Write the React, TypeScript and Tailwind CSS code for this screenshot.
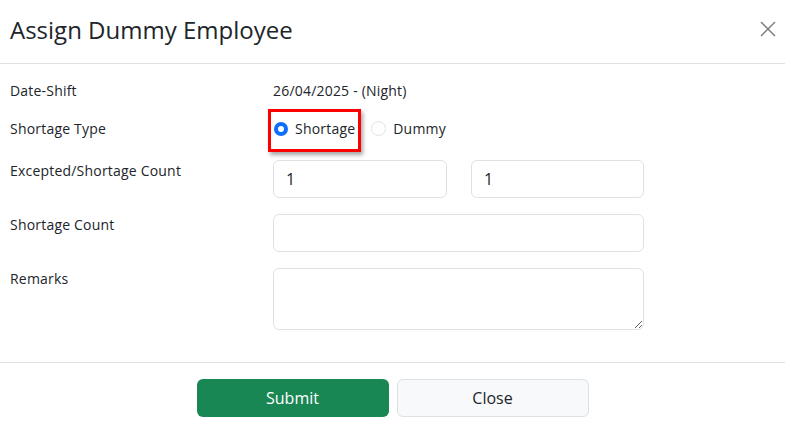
import React from "react";

export default function App() {
  const font = { fontFamily: '"Open Sans", "Noto Sans", sans-serif' };
  return (
    <div className="w-[785px] h-[428px] bg-white text-[#212529] overflow-hidden" style={font}>
      <div className="h-[64px] border-b border-[#dee2e6] flex items-center justify-between pl-[10px] pr-[9px]">
        <h1 className="text-[24px] leading-[30px] font-normal text-[#212529] mt-[-4px]">Assign Dummy Employee</h1>
        <svg width="16" height="16" viewBox="0 0 16 16" className="mt-[-6px]">
          <path d="M1 1 L15 15 M15 1 L1 15" stroke="#7a7a7a" strokeWidth="1.4" fill="none" />
        </svg>
      </div>

      <div className="pt-[16px] pb-[32px] border-b border-[#dee2e6] tracking-[0.2px]">
        <div className="flex h-[21px] mb-[17px] text-[14px] leading-[21px]">
          <div className="w-[273px] pl-[10px]">Date-Shift</div>
          <div>26/04/2025 - (Night)</div>
        </div>

        <div className="flex h-[21px] mb-[21px] text-[14px] leading-[21px]">
          <div className="w-[273px] pl-[10px]">Shortage Type</div>
          <div className="flex items-center relative">
            <div className="absolute left-[-5px] top-[-9px] w-[93px] h-[43px] border-[3px] border-[#ff0000] shadow-[2px_3px_4px_rgba(0,0,0,0.35)]" />
            <span className="w-[14px] h-[14px] rounded-full bg-[#0d6efd] flex items-center justify-center ml-[1px]">
              <span className="w-[6px] h-[6px] rounded-full bg-white" />
            </span>
            <span className="ml-[7px]">Shortage</span>
            <span className="w-[15px] h-[15px] rounded-full border border-[#dee2e6] ml-[16px]" />
            <span className="ml-[7px]">Dummy</span>
          </div>
        </div>

        <div className="flex mb-[16px] text-[14px] leading-[21px]">
          <div className="w-[273px] pl-[10px]">Excepted/Shortage Count</div>
          <div className="flex gap-[24px]">
            <div className="w-[174px] h-[38px] border border-[#dee2e6] rounded-[6px] flex items-center pl-[12px] text-[16px]">1</div>
            <div className="w-[173px] h-[38px] border border-[#dee2e6] rounded-[6px] flex items-center pl-[12px] text-[16px]">1</div>
          </div>
        </div>

        <div className="flex mb-[16px] text-[14px] leading-[21px]">
          <div className="w-[273px] pl-[10px]">Shortage Count</div>
          <div className="w-[371px] h-[38px] border border-[#dee2e6] rounded-[6px]" />
        </div>

        <div className="flex text-[14px] leading-[21px]">
          <div className="w-[273px] pl-[10px]">Remarks</div>
          <textarea className="w-[371px] h-[62px] border border-[#dee2e6] rounded-[6px] outline-none" readOnly />
        </div>
      </div>

      <div className="flex justify-center gap-[8px] pt-[16px]">
        <button className="w-[192px] h-[38px] rounded-[6px] bg-[#198754] text-white text-[16px]">Submit</button>
        <button className="w-[192px] h-[38px] rounded-[6px] bg-[#f8f9fa] border border-[#dee2e6] text-[#212529] text-[16px]">Close</button>
      </div>
    </div>
  );
}
